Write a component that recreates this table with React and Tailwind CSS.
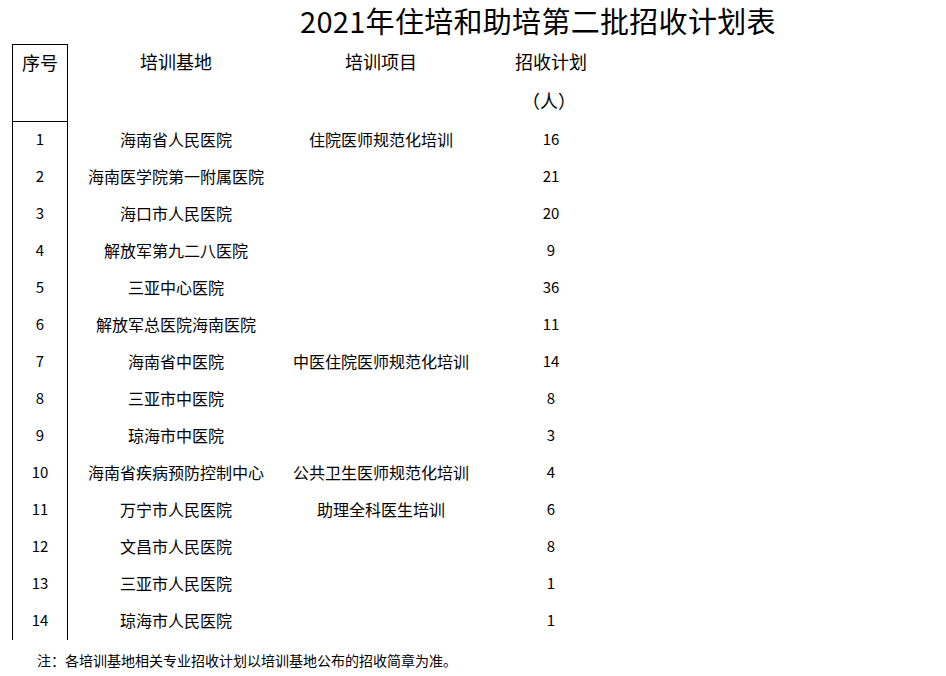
const rows = [
  ["1", "海南省人民医院", "住院医师规范化培训", "16"],
  ["2", "海南医学院第一附属医院", "", "21"],
  ["3", "海口市人民医院", "", "20"],
  ["4", "解放军第九二八医院", "", "9"],
  ["5", "三亚中心医院", "", "36"],
  ["6", "解放军总医院海南医院", "", "11"],
  ["7", "海南省中医院", "中医住院医师规范化培训", "14"],
  ["8", "三亚市中医院", "", "8"],
  ["9", "琼海市中医院", "", "3"],
  ["10", "海南省疾病预防控制中心", "公共卫生医师规范化培训", "4"],
  ["11", "万宁市人民医院", "助理全科医生培训", "6"],
  ["12", "文昌市人民医院", "", "8"],
  ["13", "三亚市人民医院", "", "1"],
  ["14", "琼海市人民医院", "", "1"],
];

export default function App() {
  return (
    <div className="h-[676px] w-[946px] bg-white text-black" style={{ fontFamily: '"Noto Sans CJK SC", "Noto Sans", sans-serif' }}>
      <div className="flex h-[44px] items-start pl-[300px] pt-[1px]">
        <h1 className="text-[29px] leading-[38px] tracking-[0.3px]">2021年住培和助培第二批招收计划表</h1>
      </div>
      <div className="ml-[12px] grid grid-cols-[56px_216px_194px_146px]">
        <div className="flex h-[78px] flex-col items-center border-x border-y border-black pt-[5px] text-[18px] leading-[24px]">序号</div>
        <div className="flex flex-col items-center pt-[5px] text-[18px] leading-[24px]">培训基地</div>
        <div className="flex flex-col items-center pt-[5px] text-[18px] leading-[24px]">培训项目</div>
        <div className="flex flex-col items-center pt-[5px] text-[18px] leading-[24px]">
          <span>招收计划</span>
          <span className="mt-[15px] pr-[4px]">（人）</span>
        </div>
        {rows.map((r) => (
          <div key={r[0]} className="contents">
            <div className="flex h-[37px] items-center justify-center border-x border-black pb-[3px] text-[15px]">{r[0]}</div>
            <div className="flex h-[37px] items-center justify-center pb-[4px] text-[16px]">{r[1]}</div>
            <div className="flex h-[37px] items-center justify-center pb-[4px] text-[16px]">{r[2]}</div>
            <div className="flex h-[37px] items-center justify-center pb-[3px] text-[15px]">{r[3]}</div>
          </div>
        ))}
      </div>
      <p className="mt-[10px] pl-[37px] text-[14px]">注：各培训基地相关专业招收计划以培训基地公布的招收简章为准。</p>
    </div>
  );
}
